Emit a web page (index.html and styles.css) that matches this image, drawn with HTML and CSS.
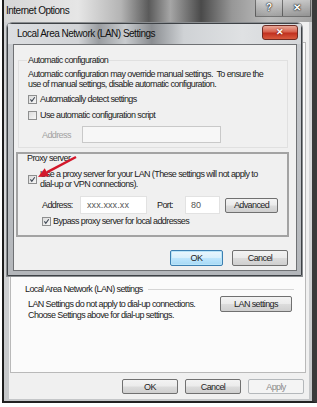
FILE: index.html
```html
<!DOCTYPE html>
<html>
<head>
<meta charset="utf-8">
<title>Internet Options</title>
<link rel="stylesheet" href="styles.css">
</head>
<body>
<div class="window">
    <div class="titlebar">
        <span class="title">Internet Options</span>
        <div class="caption">
            <span class="cap-btn">?</span>
            <span class="cap-btn">&#x2715;</span>
        </div>
    </div>
    <div class="client">
        <div class="tabpage">
            <div class="group-head">
                <span>Local Area Network (LAN) settings</span>
                <span class="rule"></span>
            </div>
            <div class="lan-row">
                <p class="lan-text">LAN Settings do not apply to dial-up connections.<br>Choose Settings above for dial-up settings.</p>
                <span class="btn btn-lan">LAN settings</span>
            </div>
        </div>
        <div class="buttons">
            <span class="btn btn-bottom">OK</span>
            <span class="btn btn-bottom">Cancel</span>
            <span class="btn btn-bottom btn-disabled">Apply</span>
        </div>
    </div>

    <!-- modal LAN dialog sits over the options window -->
    <div class="dialog">
        <div class="dialog-title">
            <span>Local Area Network (LAN) Settings</span>
            <span class="close-btn">&#x2715;</span>
        </div>
        <div class="dialog-client">
            <fieldset class="auto-group">
                <legend>Automatic configuration</legend>
                <p class="desc">Automatic configuration may override manual settings.&nbsp; To ensure the<br>use of manual settings, disable automatic configuration.</p>
                <div class="check-row">
                    <span class="check on"><svg viewBox="0 0 9 9"><path d="M1.8 4.4 L3.6 6.8 L7.4 1.6"/></svg></span>
                    <span>Automatically detect settings</span>
                </div>
                <div class="check-row row-script">
                    <span class="check"></span>
                    <span>Use automatic configuration script</span>
                </div>
                <div class="addr-row">
                    <span class="addr-label">Address</span>
                    <span class="field field-disabled"></span>
                </div>
            </fieldset>

            <div class="proxy-group">
                <div class="proxy-legend">Proxy server</div>
                <div class="check-row proxy-use">
                    <span class="check on"><svg viewBox="0 0 9 9"><path d="M1.8 4.4 L3.6 6.8 L7.4 1.6"/></svg></span>
                    <span class="proxy-text">Use a proxy server for your LAN (These settings will not apply to<br>dial-up or VPN connections).</span>
                </div>
                <div class="proxy-addr">
                    <span class="proxy-label">Address:</span>
                    <span class="field field-addr">xxx.xxx.xx</span>
                    <span class="port-label">Port:</span>
                    <span class="field field-port">80</span>
                    <span class="btn btn-adv">Advanced</span>
                </div>
                <div class="check-row bypass">
                    <span class="check on"><svg viewBox="0 0 9 9"><path d="M1.8 4.4 L3.6 6.8 L7.4 1.6"/></svg></span>
                    <span>Bypass proxy server for local addresses</span>
                </div>
            </div>

            <div class="dialog-buttons">
                <span class="btn btn-default">OK</span>
                <span class="btn btn-cancel">Cancel</span>
            </div>
        </div>
    </div>

    <svg class="arrow" viewBox="0 0 50 35" width="50" height="35">
        <line x1="42" y1="7" x2="12.8" y2="22.3"/>
        <polygon points="4,27 15,26.3 10.7,18.3"/>
    </svg>
</div>
</body>
</html>
```

FILE: styles.css
```css
*
{
    box-sizing: border-box;
}
body
{
    margin: 0px;
    padding: 0px;
    background: #ffffff;
    font-family: "Liberation Sans", Arial, sans-serif;
    font-size: 9px;
    line-height: 10px;
    letter-spacing: -0.6px;
    color: #222;
    white-space: nowrap;
}
p
{
    margin: 0;
}

/* outer Internet Options window */
.window
{
    position: relative;
    margin-left: 2px;
    width: 315px;
    height: 403px;
    border-left: 2px solid #1c1c1c;
    border-right: 5px solid #3a3a3a;
    border-bottom: 2px solid #222;
    background: linear-gradient(180deg, #cfd0d2 0%, #d9dadc 40%, #c4c6c8 100%);
    display: flex;
    flex-direction: column;
}
.titlebar
{
    height: 22px;
    display: flex;
    align-items: flex-start;
    background: linear-gradient(90deg, #d6d6d6 0%, #e6e6e6 24%, #b4b4b4 38%, #5a5a5a 47%, #a6a6a6 54%, #4a4a4a 64%, #979797 74%, #bdbdbd 86%, #a4a4a4 100%);
}
.title
{
    padding: 6px 0 0 2px;
    font-size: 10px;
    letter-spacing: -0.5px;
    color: #111;
}
.caption
{
    margin-left: auto;
    margin-right: 1px;
    display: flex;
}
.cap-btn
{
    width: 28px;
    height: 17px;
    border: 1px solid rgba(40, 40, 40, 0.55);
    border-top: none;
    background: linear-gradient(180deg, rgba(255,255,255,0.35), rgba(90,90,90,0.25));
    color: #fff;
    font-weight: bold;
    font-size: 10px;
    letter-spacing: 0;
    line-height: 16px;
    text-align: center;
    text-shadow: 0 0 2px #000, 0 0 1px #000;
}
.cap-btn + .cap-btn
{
    border-left: none;
}

.client
{
    flex: 1;
    margin: 0 3px 2px 5px;
    background: #f0f0f0;
    padding: 20px 3px 0 1px;
}
.tabpage
{
    height: 331px;
    border: 1px solid #b9b9b9;
    background: #fbfbfb;
    padding: 241px 11px 0 14px;
}
.group-head
{
    display: flex;
    align-items: center;
}
.rule
{
    flex: 1;
    height: 1px;
    margin-left: 5px;
    background: #d6d6d6;
}
.lan-row
{
    display: flex;
    justify-content: space-between;
    align-items: flex-start;
    margin-top: 2px;
}
.lan-text
{
    padding: 3px 0 0 3px;
    line-height: 11px;
}

/* buttons */
.btn
{
    display: flex;
    align-items: center;
    justify-content: center;
    border: 1px solid #707070;
    border-radius: 2px;
    background: linear-gradient(180deg, #f3f3f3 0%, #ebebeb 48%, #dcdcdc 52%, #cfcfcf 100%);
    color: #1e1e1e;
}
.btn-lan
{
    width: 72px;
    height: 16px;
    margin-right: 2px;
}
.buttons
{
    display: flex;
    justify-content: flex-end;
    gap: 7px;
    margin-top: 6px;
    padding-right: 2px;
}
.btn-bottom
{
    width: 56px;
    height: 15px;
}
.btn-disabled
{
    border-color: #b4b8bb;
    background: #f4f4f4;
    color: #8b8b8b;
}

/* LAN settings dialog */
.dialog
{
    position: absolute;
    left: 3px;
    top: 23px;
    width: 295px;
    height: 253px;
    border: 1px solid #3e4246;
    border-radius: 5px 5px 0 0;
    background: linear-gradient(180deg, #c9ccd0 0%, #b3b6ba 100%);
    padding: 0 4px 4px 5px;
    display: flex;
    flex-direction: column;
    box-shadow: 0 0 0 1px #8a8d90;
}
.dialog-title
{
    position: relative;
    height: 20px;
    padding: 5px 0 0 9px;
    margin: 0 -4px 0 -5px;
    font-size: 10px;
    letter-spacing: -0.5px;
    color: #111;
    background: linear-gradient(90deg, #dcdee1 0%, #d2d4d7 24%, #9a9da1 31%, #c9cccf 40%, #8a8d91 49%, #cfd2d5 60%, #dfe1e3 80%, #d4d6d9 100%);
}
.close-btn
{
    position: absolute;
    right: 3px;
    top: 1px;
    width: 36px;
    height: 15px;
    border: 1px solid #6e2a22;
    border-radius: 3px;
    background: linear-gradient(180deg, #e9a898 0%, #d7624f 45%, #c1301f 55%, #d85a3e 100%);
    color: #fff;
    font-weight: bold;
    font-size: 9px;
    letter-spacing: 0;
    line-height: 13px;
    text-align: center;
    text-shadow: 0 0 2px #5a1008;
}
.dialog-client
{
    flex: 1;
    border: 1px solid #6f7174;
    background: #f0f0f0;
    padding: 10px 8px 0 4px;
}
.auto-group
{
    margin: 0;
    padding: 4px 9px 4px 9px;
    border: 1px solid #e0e0e0;
}
.auto-group legend
{
    padding: 0 1px;
    margin-left: -1px;
    line-height: 10px;
}
.check-row
{
    display: flex;
    align-items: center;
    gap: 3px;
    margin-top: 5px;
}
.row-script
{
    margin-top: 6px;
}
.check
{
    width: 9px;
    height: 9px;
    border: 1px solid #8e8f8f;
    background: linear-gradient(135deg, #dcdcdc 0%, #f6f6f6 100%);
    display: inline-block;
    flex: none;
}
.check svg
{
    display: block;
    width: 7px;
    height: 7px;
}
.check path
{
    fill: none;
    stroke: #3b4450;
    stroke-width: 1.4;
}
.addr-row
{
    display: flex;
    align-items: center;
    margin-top: 6px;
    padding-left: 14px;
    height: 17px;
}
.addr-label
{
    width: 40px;
    color: #a2a2a2;
}
.field
{
    display: flex;
    align-items: center;
    height: 100%;
    border: 1px solid #e2e2e2;
    background: #ffffff;
    color: #555;
}
.field-disabled
{
    width: 139px;
    border-color: #c9c9c9;
    background: #f7f7f7;
}

.proxy-group
{
    width: 273px;
    margin: 4px 0 0 -2px;
    border: 2px solid #a3a3a3;
    padding: 0 0 9px 0;
}
.proxy-legend
{
    margin-top: -1px;
    padding-left: 9px;
}
.proxy-use
{
    margin-top: 6px;
    padding-left: 10px;
}
.proxy-addr
{
    display: flex;
    align-items: center;
    height: 18px;
    margin-top: 7px;
    padding-left: 24px;
}
.proxy-label
{
    width: 38px;
}
.field-addr
{
    width: 67px;
    padding-left: 6px;
    letter-spacing: 0.1px;
}
.port-label
{
    width: 28px;
    margin-left: 10px;
}
.field-port
{
    width: 35px;
    padding-left: 5px;
    letter-spacing: 0;
}
.btn-adv
{
    width: 53px;
    height: 15px;
    margin-left: 5px;
}
.bypass
{
    margin-top: 2px;
    padding-left: 24px;
    gap: 2px;
}

.dialog-buttons
{
    display: flex;
    justify-content: flex-end;
    gap: 9px;
    margin-top: 13px;
}
.btn-default
{
    width: 53px;
    height: 16px;
    border-color: #3c7fb1;
    background: linear-gradient(180deg, #eaf6fd 0%, #d9f0fc 48%, #bee6fd 52%, #a7d9f5 100%);
    box-shadow: inset 0 0 0 1px #b9e4f8;
}
.btn-cancel
{
    width: 56px;
    height: 16px;
}

.arrow
{
    position: absolute;
    left: 30px;
    top: 150px;
}
.arrow line
{
    stroke: #d3182b;
    stroke-width: 2.5;
}
.arrow polygon
{
    fill: #d3182b;
}
```
